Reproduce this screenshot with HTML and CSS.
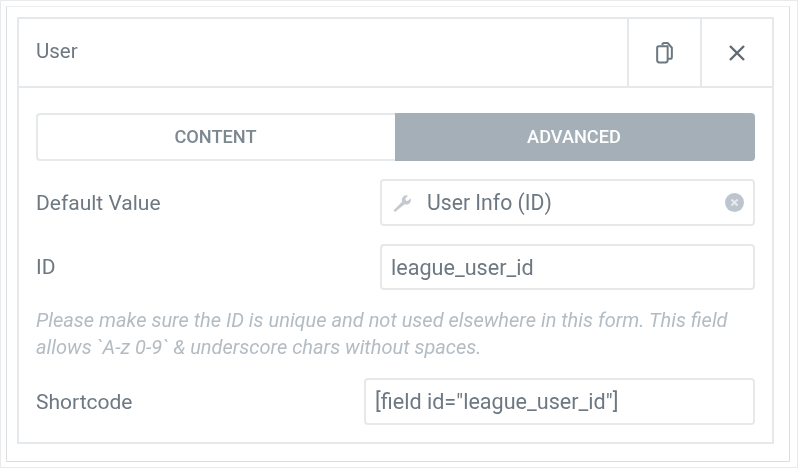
FILE: index.html
```html
<!DOCTYPE html>
<html lang="en">
<head>
    <meta charset="UTF-8">
    <meta name="viewport" content="width=device-width, initial-scale=1.0">
    <title>User field settings</title>
    <link rel="stylesheet" href="styles.css">
</head>
<body>
    <div class="frame">
        <div class="panel">
            <div class="panel-header">
                <div class="panel-title">User</div>
                <button class="header-btn" aria-label="Duplicate">
                    <svg width="21" height="24" viewBox="0 0 20 22" fill="none" stroke="#6d7882" stroke-width="1.9" stroke-linejoin="round">
                        <path d="M8 3.5V3a1.5 1.5 0 0 1 1.5-1.5H13l4 4.5v9a1.5 1.5 0 0 1-1.5 1.5H13"/>
                        <path d="M13 5.5v-1L9 4.5H4.5A1.5 1.5 0 0 0 3 6v12a2 2 0 0 0 2 2h6a2 2 0 0 0 2-2z"/>
                    </svg>
                </button>
                <button class="header-btn" aria-label="Close">
                    <svg width="18" height="18" viewBox="0 0 18 18" fill="none" stroke="#5f6b75" stroke-width="2.4">
                        <path d="M2 2l14 14M16 2L2 16"/>
                    </svg>
                </button>
            </div>
            <div class="panel-body">
                <div class="tabs">
                    <div class="tab">CONTENT</div>
                    <div class="tab active">ADVANCED</div>
                </div>

                <div class="form-row">
                    <label class="form-label">Default Value</label>
                    <div class="field field-dynamic">
                        <svg class="wrench" width="20" height="20" viewBox="0 0 20 20" fill="#c3c9cf">
                            <path d="M1.5 17.5l8.6-8.8a4.6 4.6 0 0 1 6-6l-2.8 2.8.5 2 2 .5 2.8-2.8a4.6 4.6 0 0 1-6 6L3 19z"/>
                        </svg>
                        <span class="field-text">User Info (ID)</span>
                        <svg class="clear" width="19" height="19" viewBox="0 0 19 19">
                            <circle cx="9.5" cy="9.5" r="9.5" fill="#bcc5cd"/>
                            <path d="M6.5 6.5l6 6M12.5 6.5l-6 6" stroke="#e6eaed" stroke-width="2"/>
                        </svg>
                    </div>
                </div>

                <div class="form-row row-id">
                    <label class="form-label">ID</label>
                    <div class="field">league_user_id</div>
                </div>

                <p class="help">Please make sure the ID is unique and not used elsewhere in this form. This field allows `A-z 0-9` &amp; underscore chars without spaces.</p>

                <div class="form-row">
                    <label class="form-label">Shortcode</label>
                    <div class="field field-wide">[field id="league_user_id"]</div>
                </div>
            </div>
        </div>
    </div>
</body>
</html>
```

FILE: styles.css
```css
html, body {
    margin: 0;
    padding: 0;
}

body {
    width: 798px;
    height: 468px;
    box-sizing: border-box;
    padding: 5px 7px 5px 5px;
    border: 1px solid #e8eaec;
    background: white;
    font-family: Roboto, sans-serif;
    color: #6d7882;
    overflow: hidden;
}

.frame {
    height: 456px;
    box-sizing: border-box;
    padding: 10px 15px 17px 10px;
    border: 1px solid #dcdfe2;
    border-top-color: #eceef0;
    filter: blur(0.7px);
}

.panel {
    height: 427px;
    box-sizing: border-box;
    border: 2px solid #e6e9ec;
}

.panel-header {
    display: flex;
    height: 67px;
    border-bottom: 2px solid #e6e9ec;
}

.panel-title {
    flex: 1;
    padding-left: 17px;
    font-size: 20.5px;
    line-height: 65px;
}

.header-btn {
    width: 72.5px;
    padding: 0;
    border: none;
    border-left: 2px solid #e6e9ec;
    background: none;
    display: flex;
    align-items: center;
    justify-content: center;
}

.panel-body {
    padding: 25px 17px 0 17px;
}

.tabs {
    display: flex;
    height: 48px;
    margin-bottom: 18px;
}

.tab {
    box-sizing: border-box;
    width: 359px;
    padding-right: 2px;
    border: 2px solid #e6e9ec;
    border-right: none;
    border-radius: 4px 0 0 4px;
    font-size: 18.2px;
    font-weight: 500;
    line-height: 44px;
    text-align: center;
    color: #7d8790;
}

.tab.active {
    width: 360px;
    border: none;
    border-radius: 0 4px 4px 0;
    background: #a4afb7;
    color: white;
    line-height: 48px;
}

.form-row {
    display: flex;
    align-items: center;
    justify-content: space-between;
    height: 47px;
}

.row-id {
    height: 46px;
    margin-top: 18px;
}

.form-label {
    font-size: 21px;
}

.field {
    box-sizing: border-box;
    width: 375px;
    height: 100%;
    padding-left: 9px;
    border: 2px solid #e6e9ec;
    border-radius: 4px;
    display: flex;
    align-items: center;
    font-size: 21.6px;
}

.field-dynamic {
    padding-left: 10px;
    padding-right: 9px;
}

.field-text {
    flex: 1;
    margin-left: 15px;
    font-size: 21.2px;
}

.field-wide {
    width: 391px;
}

.help {
    margin: 17px 0 17px;
    font-size: 20px;
    font-style: italic;
    line-height: 27px;
    color: #b4bcc3;
}
```
